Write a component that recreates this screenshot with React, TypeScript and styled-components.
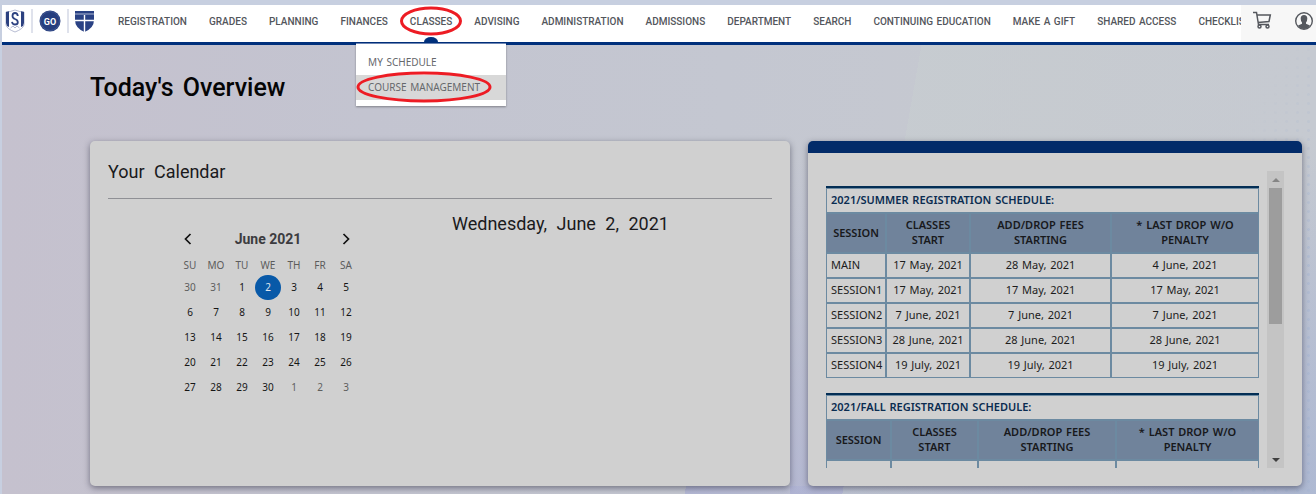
import React from "react";
import styled, { createGlobalStyle, css } from "styled-components";

const navy = "#00307c";

const GlobalStyle = createGlobalStyle`
  *, *::before, *::after { box-sizing: border-box; }
  body {
    margin: 0;
    background: #c7cfe0;
    font-family: "Noto Sans", sans-serif;
    word-spacing: 1px;
    color: #1c1c1c;
  }
  button { font: inherit; color: inherit; background: none; border: 0; padding: 0; cursor: pointer; }
  a { color: inherit; text-decoration: none; }
`;

const Page = styled.div`
  display: flex;
  flex-direction: column;
  min-height: 100vh;
  padding: 5px 0 0 2px;
  overflow: hidden;
`;

const Header = styled.header`
  position: relative;
  z-index: 1;
  display: flex;
  height: 40px;
  background: #fff;
  border-bottom: 3px solid ${navy};
`;

const Logos = styled.div`
  display: flex;
  flex: none;
  gap: 6px;
  padding: 4px 13px 0 3px;
`;

const LogoLink = styled.a`
  display: block;
  height: 24px;
`;

const LogoRule = styled.span`
  width: 2px;
  height: 24px;
  background: #dfe2ec;
`;

const Nav = styled.nav`
  flex: 1;
  min-width: 0;
`;

const NavList = styled.ul`
  display: flex;
  height: 37px;
  margin: 0;
  padding: 0;
  list-style: none;
`;

const NavItem = styled.li`
  position: relative;
  flex: none;
  padding: 0 11px;
`;

const NavLink = styled.a`
  display: block;
  font: 500 10px/33px Roboto, sans-serif;
  color: #53565c;
  white-space: nowrap;
`;

const Marker = styled.span`
  position: absolute;
  left: 50%;
  bottom: 0;
  width: 14px;
  height: 5px;
  margin-left: -7px;
  border-radius: 7px 7px 0 0 / 5px 5px 0 0;
  background: ${navy};
`;

const Menu = styled.ul`
  position: absolute;
  z-index: 2;
  top: 38px;
  left: 50%;
  width: 150px;
  margin: 0 0 0 -75px;
  padding: 6px 0;
  list-style: none;
  background: #fff;
  border-top: 1px solid #6d86b4;
  box-shadow: 0 1px 2px rgba(0, 0, 0, 0.35);
`;

const MenuItem = styled.li`
  position: relative;
`;

const MenuLink = styled.a<{ $active?: boolean }>`
  display: block;
  padding-left: 12px;
  font-size: 10px;
  line-height: 25px;
  color: #66686c;
  white-space: nowrap;
  background: ${(p) => (p.$active ? "#d8d8d8" : "transparent")};
`;

const Ring = styled.svg<{ $w: number; $h: number }>`
  position: absolute;
  z-index: 3;
  width: ${(p) => p.$w}px;
  height: ${(p) => p.$h}px;
  fill: none;
  stroke: #ed1c24;
  stroke-width: 3;
  pointer-events: none;
`;

const NavRing = styled(Ring)`
  top: 1px;
  left: 50%;
  margin-left: -31px;
`;

const MenuRing = styled(Ring)`
  left: 0;
  top: -4px;
`;

const Tools = styled.div`
  position: relative;
  z-index: 1;
  display: flex;
  flex: none;
  gap: 22px;
  width: 75px;
  padding: 5px 0 0 11px;
  background: #f7f7f7;
  button { display: block; height: 22px; flex: none; }
  svg { display: block; }
`;

const Main = styled.main`
  position: relative;
  isolation: isolate;
  flex: 1;
  padding: 0 14px 8px 88px;
  background:
    linear-gradient(100deg, transparent 66%, rgba(200, 207, 208, 0.5) 66%, rgba(200, 207, 208, 0) 92%),
    linear-gradient(125deg, transparent 84%, rgba(165, 185, 212, 0.45) 100%),
    linear-gradient(100deg, transparent 52%, rgba(160, 165, 215, 0.45) 52%, rgba(160, 165, 215, 0) 70%) 0 100% / 100% 8px no-repeat,
    linear-gradient(180deg, transparent 25%, rgba(170, 174, 210, 0.6) 100%) 788px 0 / 100% 100% no-repeat,
    linear-gradient(90deg, #c5c1ce 0%, #c3c4d0 28%, #c4c7d1 55%, #c6c9d0 80%, #c6cad1 100%);
  &::before {
    content: "";
    position: absolute;
    z-index: -1;
    top: 0;
    right: 0;
    bottom: 0;
    width: 90px;
    background: radial-gradient(circle, rgba(160, 178, 210, 0.35) 1px, transparent 2px) 0 0 / 11px 9px;
    mask-image: linear-gradient(115deg, transparent 20%, #000 60%);
  }
`;

const Title = styled.h1`
  margin: 0;
  padding: 27px 0 37px;
  font: 500 25px/32px Roboto, sans-serif;
  word-spacing: 3px;
  color: #050505;
`;

const Columns = styled.div`
  display: grid;
  grid-template-columns: 700fr 494fr;
  gap: 18px;
`;

const card = css`
  min-width: 0;
  border-radius: 5px;
  background: #d0d0d0;
  box-shadow: 0 2px 6px rgba(30, 30, 50, 0.5);
`;

const CalendarCard = styled.section`
  ${card}
  padding: 18px;
`;

const heading = css`
  margin: 0;
  font: 400 18px/26px Roboto, sans-serif;
  word-spacing: 5px;
  color: #1a1a1c;
`;

const CardTitle = styled.h2`
  ${heading}
  padding-bottom: 13px;
  border-bottom: 1px solid #8f9095;
`;

const CalendarBody = styled.div`
  display: grid;
  grid-template-columns: 1fr 1fr;
  padding-top: 12px;
`;

const DayTitle = styled.h3`
  ${heading}
  padding-left: 12px;
`;

const Picker = styled.div`
  width: 182px;
  margin-left: 69px;
  padding-top: 15px;
`;

const PickerHead = styled.div`
  display: flex;
  align-items: center;
  justify-content: space-between;
  padding: 0 5px;
  font: 700 14px/26px Roboto, sans-serif;
  word-spacing: 0;
  color: #3c3c3f;
  button { display: block; width: 14px; height: 16px; color: #111; }
  svg { display: block; }
`;

const Days = styled.table`
  width: 100%;
  table-layout: fixed;
  border-collapse: collapse;
  font-size: 10px;
  line-height: 25px;
  text-align: center;
  th { padding: 3px 0 0; height: 23px; line-height: 20px; font-weight: 400; color: #5c5c5c; }
  td { padding: 0; height: 25px; }
`;

const Day = styled.button<{ $muted?: boolean; $picked?: boolean }>`
  display: block;
  width: 26px;
  height: 25px;
  border-radius: 13px;
  color: ${(p) => (p.$picked ? "#e0e6ee" : p.$muted ? "#5e5e5e" : "#161616")};
  background: ${(p) => (p.$picked ? "#0859a8" : "transparent")};
`;

const ScheduleCard = styled.section`
  ${card}
  border-top: 12px solid #022b69;
  padding: 18px;
`;

const ScrollFrame = styled.div`
  display: flex;
  gap: 8px;
  height: 297px;
`;

const ScrollArea = styled.div`
  flex: 1;
  min-width: 0;
  overflow: hidden;
`;

const ScrollBar = styled.div`
  display: flex;
  flex-direction: column;
  align-items: center;
  justify-content: space-between;
  width: 17px;
  background: #c4c4c4;
`;

const Thumb = styled.div`
  width: 13px;
  height: 136px;
  margin-bottom: auto;
  background: #9d9d9d;
`;

const ScrollButton = styled.button<{ $dim?: boolean }>`
  display: flex;
  align-items: center;
  justify-content: center;
  width: 17px;
  height: 17px;
  color: ${(p) => (p.$dim ? "#858585" : "#404040")};
`;

const Schedule = styled.table`
  width: 100%;
  margin-top: 15px;
  table-layout: fixed;
  border-collapse: separate;
  border-spacing: 0;
  border-top: 2px solid #032e55;
  font-size: 11px;
  line-height: 15px;
  text-align: center;
  th, td { border: 1px solid #6c8aa1; padding: 3px 4px 5px; white-space: nowrap; }
  td:first-child { text-align: left; }
`;

const ScheduleName = styled.th`
  text-align: left;
  font-weight: 600;
  color: #0a2c50;
`;

const ColumnName = styled.th`
  height: 40px;
  font-weight: 600;
  background: #70839b;
  color: #18191c;
`;

const navItems = [
  "REGISTRATION", "GRADES", "PLANNING", "FINANCES", "CLASSES", "ADVISING", "ADMINISTRATION",
  "ADMISSIONS", "DEPARTMENT", "SEARCH", "CONTINUING EDUCATION", "MAKE A GIFT", "SHARED ACCESS", "CHECKLIST",
];

const weekdays = ["SU", "MO", "TU", "WE", "TH", "FR", "SA"];

const weeks = [
  [30, 31, 1, 2, 3, 4, 5],
  [6, 7, 8, 9, 10, 11, 12],
  [13, 14, 15, 16, 17, 18, 19],
  [20, 21, 22, 23, 24, 25, 26],
  [27, 28, 29, 30, 1, 2, 3],
];

const summer = [
  ["MAIN", "17 May, 2021", "28 May, 2021", "4 June, 2021"],
  ["SESSION1", "17 May, 2021", "17 May, 2021", "17 May, 2021"],
  ["SESSION2", "7 June, 2021", "7 June, 2021", "7 June, 2021"],
  ["SESSION3", "28 June, 2021", "28 June, 2021", "28 June, 2021"],
  ["SESSION4", "19 July, 2021", "19 July, 2021", "19 July, 2021"],
];

const fall = [["", "", "", ""]];

function ScheduleTable({ name, rows, widths }: { name: string; rows: string[][]; widths: number[] }) {
  return (
    <Schedule>
      <colgroup>
        {widths.map((w, i) => <col key={i} width={w} />)}
        <col />
      </colgroup>
      <thead>
        <tr><ScheduleName colSpan={4}>{name}</ScheduleName></tr>
        <tr>
          <ColumnName scope="col">SESSION</ColumnName>
          <ColumnName scope="col">CLASSES<br />START</ColumnName>
          <ColumnName scope="col">ADD/DROP FEES<br />STARTING</ColumnName>
          <ColumnName scope="col">* LAST DROP W/O<br />PENALTY</ColumnName>
        </tr>
      </thead>
      <tbody>
        {rows.map((row, r) => (
          <tr key={r}>{row.map((cell, c) => <td key={c}>{cell || "\u00a0"}</td>)}</tr>
        ))}
      </tbody>
    </Schedule>
  );
}

export default function App() {
  return (
    <Page>
      <GlobalStyle />
      <Header>
        <Logos>
          <LogoLink href="#" aria-label="University">
            <svg width="20" height="24" viewBox="0 0 20 24">
              <path d="M1 3Q5 3 10 1Q15 3 19 3V16Q18 20 10 23Q2 20 1 16Z" fill="#fff" stroke="#a3aac6" strokeWidth="0.800" />
              <path d="M1 3L4 2.300V18L2 17L1 14ZM19 3L16 2.300V18L18 17L19 14Z" fill="#2c4180" />
              <path d="M12.800 7Q12.500 4 10 4Q7.500 4 7.500 7Q7.500 9 10 10Q12.800 11 12.800 13.200Q12.800 15.500 10 15.500Q7.500 15.500 7 12.800" fill="none" stroke="#2c4180" strokeWidth="1.800" />
              <path d="M5.500 19L8 17L10 19L12 17L14.500 19" fill="none" stroke="#a9b0ca" strokeWidth="0.900" />
            </svg>
          </LogoLink>
          <LogoRule />
          <LogoLink href="#" aria-label="Go">
            <svg width="22" height="24" viewBox="0 0 22 24">
              <circle cx="11" cy="12" r="10.500" fill="#263e7e" />
              <circle cx="11" cy="12" r="9.500" fill="none" stroke="#4d619a" strokeWidth="0.600" />
              <text x="11" y="15.500" textAnchor="middle" fontFamily="Roboto" fontWeight="700" fontSize="9" fill="#fff">GO</text>
            </svg>
          </LogoLink>
          <LogoRule />
          <LogoLink href="#" aria-label="Faith">
            <svg width="19" height="24" viewBox="0 0 19 24">
              <path d="M0 2H19V11Q19 19 9.500 23Q0 19 0 11Z" fill="#2a4284" />
              <path d="M0 5H19" stroke="#8a97bd" strokeWidth="1.400" />
              <path d="M0 11.500H19M9.500 6V23" stroke="#fff" strokeWidth="1.400" />
            </svg>
          </LogoLink>
        </Logos>
        <Nav>
          <NavList>
            {navItems.map((label) => (
              <NavItem key={label}>
                <NavLink href="#">{label}</NavLink>
                {label === "CLASSES" && (
                  <>
                    <Marker />
                    <NavRing $w={62} $h={30} viewBox="0 0 62 30"><ellipse cx="31" cy="15" rx="29.500" ry="13" /></NavRing>
                    <Menu>
                      <MenuItem><MenuLink href="#">MY SCHEDULE</MenuLink></MenuItem>
                      <MenuItem>
                        <MenuLink href="#" $active>COURSE MANAGEMENT</MenuLink>
                        <MenuRing $w={136} $h={32} viewBox="0 0 136 32"><ellipse cx="68" cy="16" rx="66" ry="14" /></MenuRing>
                      </MenuItem>
                    </Menu>
                  </>
                )}
              </NavItem>
            ))}
          </NavList>
        </Nav>
        <Tools>
          <button aria-label="Cart">
            <svg width="20" height="20" viewBox="0 0 20 20" fill="none" stroke="#55585e" strokeWidth="1.500">
              <path d="M1 1.500H4.500L6.500 13.500H17M5 4H18.300L17 10.500L6 11.500" />
              <circle cx="7.500" cy="15.500" r="1.500" /><circle cx="15.500" cy="15.500" r="1.500" />
            </svg>
          </button>
          <button aria-label="Account">
            <svg width="20" height="22" viewBox="0 0 20 22">
              <circle cx="10" cy="11" r="8.300" fill="none" stroke="#55585e" strokeWidth="1.400" />
              <path d="M10 5Q13.300 5 13.300 8.500Q13.300 11 12 12.500V13.700L16 15.500Q13.500 19 10 19Q6.500 19 4 15.500L8 13.700V12.500Q6.700 11 6.700 8.500Q6.700 5 10 5Z" fill="#55585e" />
            </svg>
          </button>
        </Tools>
      </Header>
      <Main>
        <Title>Today's Overview</Title>
        <Columns>
          <CalendarCard>
            <CardTitle>Your Calendar</CardTitle>
            <CalendarBody>
              <Picker>
                <PickerHead>
                  <button aria-label="Previous month">
                    <svg width="14" height="14" viewBox="0 0 14 14" fill="none" stroke="currentColor" strokeWidth="1.700"><path d="M8.500 2L3.500 7L8.500 12" /></svg>
                  </button>
                  June 2021
                  <button aria-label="Next month">
                    <svg width="14" height="14" viewBox="0 0 14 14" fill="none" stroke="currentColor" strokeWidth="1.700"><path d="M3.500 2L8.500 7L3.500 12" /></svg>
                  </button>
                </PickerHead>
                <Days>
                  <thead><tr>{weekdays.map((d) => <th key={d} scope="col">{d}</th>)}</tr></thead>
                  <tbody>
                    {weeks.map((week, w) => (
                      <tr key={w}>
                        {week.map((d, i) => (
                          <td key={i}>
                            <Day $picked={w === 0 && d === 2} $muted={(w === 0 && d > 20) || (w === 4 && d < 10)}>{d}</Day>
                          </td>
                        ))}
                      </tr>
                    ))}
                  </tbody>
                </Days>
              </Picker>
              <DayTitle>Wednesday, June 2, 2021</DayTitle>
            </CalendarBody>
          </CalendarCard>
          <ScheduleCard>
            <ScrollFrame>
              <ScrollArea>
                <ScheduleTable name="2021/SUMMER REGISTRATION SCHEDULE:" rows={summer} widths={[60, 84, 141]} />
                <ScheduleTable name="2021/FALL REGISTRATION SCHEDULE:" rows={fall} widths={[65, 87, 138]} />
              </ScrollArea>
              <ScrollBar>
                <ScrollButton $dim aria-label="Scroll up">
                  <svg width="8" height="4" viewBox="0 0 8 4"><path d="M0 4L4 0L8 4Z" fill="currentColor" /></svg>
                </ScrollButton>
                <Thumb />
                <ScrollButton aria-label="Scroll down">
                  <svg width="8" height="4" viewBox="0 0 8 4"><path d="M0 0L4 4L8 0Z" fill="currentColor" /></svg>
                </ScrollButton>
              </ScrollBar>
            </ScrollFrame>
          </ScheduleCard>
        </Columns>
      </Main>
    </Page>
  );
}
